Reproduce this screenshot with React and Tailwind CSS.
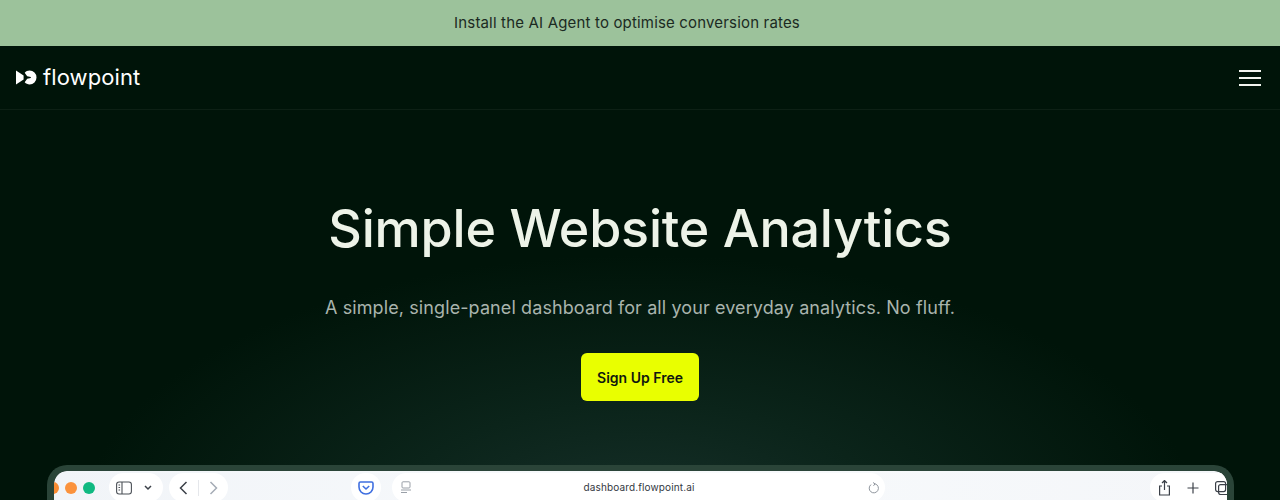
import React from "react";

const Logo = () => (
  <svg width="21" height="15" viewBox="0 0 21 15" fill="#fff">
    <path d="M0 .5 L7.6 5.4 L7.6 9.6 L0 14.5 Z" />
    <path d="M13.6 .6 A6.9 6.9 0 1 1 13.6 14.4 C11.6 14.4 10 13.6 8.7 12.2 L11.2 8.8 L14.8 8 L14.8 7 L11.2 6.2 L8.7 2.8 C10 1.4 11.6 .6 13.6 .6 Z" />
  </svg>
);

const Pill = ({ className = "", children }) => (
  <div className={`h-[29px] bg-white rounded-full flex items-center justify-center shrink-0 ${className}`}>{children}</div>
);

export default function App() {
  return (
    <div className="w-full h-[500px] overflow-hidden flex flex-col bg-[#001409] font-['Inter',sans-serif]">
      <div className="h-[46px] shrink-0 bg-[#9cc29b] flex items-center justify-center pr-[26px]">
        <span className="text-[15px] text-[#1b2a22] font-['Inter',sans-serif] tracking-[0.17px] font-normal">Install the AI Agent to optimise conversion rates</span>
      </div>
      <header className="h-[64px] shrink-0 border-b border-white/5 pl-4 pr-[19px] flex items-center justify-between">
        <div className="flex items-center gap-[6px]">
          <Logo />
          <span className="text-[22px] leading-none text-white font-['Inter',sans-serif] tracking-[0.1px] pb-[1px]">flowpoint</span>
        </div>
        <div className="w-[22px] flex flex-col gap-[5px]">
          <div className="h-[2px] bg-[#f2f5ef]" />
          <div className="h-[2px] bg-[#f2f5ef]" />
          <div className="h-[2px] bg-[#f2f5ef]" />
        </div>
      </header>
      <main className="flex-1 flex flex-col items-center pt-[88px] bg-[radial-gradient(ellipse_560px_270px_at_50%_100%,#17302a_0%,#0b241a_45%,#001409_100%)]">
        <h1 className="text-[52px] leading-[62px] font-medium text-[#edf3e8] font-['Inter',sans-serif] tracking-[-0.2px]">Simple Website Analytics</h1>
        <p className="mt-[34px] text-[18px] leading-[28px] text-[#a9b4ad] tracking-[0.1px]">A simple, single-panel dashboard for all your everyday analytics. No fluff.</p>
        <button className="mt-[31px] h-[48px] w-[118px] rounded-[6px] bg-[#e9ff00] text-[#10180f] text-[14px] font-semibold">Sign Up Free</button>
        <div className="mt-[64px] w-[1187px] h-[60px] shrink-0 rounded-t-[20px] border-x-[7px] border-t-[6px] border-[#2a4438] overflow-hidden">
          <div className="h-full rounded-t-[12px] overflow-hidden bg-gradient-to-r from-[#f1f4f8] via-[#f8fafc] to-[#f4f6f9]">
            <div className="pt-[2px] flex items-center text-[#3b4048] -ml-[7px]">
              <div className="flex items-center gap-[6px]">
                <span className="w-3 h-3 rounded-full bg-[#f98c33]" />
                <span className="w-3 h-3 rounded-full bg-[#fb923c]" />
                <span className="w-3 h-3 rounded-full bg-[#10b981]" />
              </div>
              <Pill className="w-[54px] ml-[14px] gap-[12px] justify-start pl-[7px]">
                <svg width="16" height="14" viewBox="0 0 16 14" fill="none" stroke="#4b5057" strokeWidth="1.1"><rect x=".6" y="1" width="14.8" height="12" rx="2.5" /><path d="M6 1v12M2.5 4h1.6M2.5 6.5h1.6M2.5 9h1.6" /></svg>
                <svg width="8" height="6" viewBox="0 0 8 6" fill="none" stroke="#3b4048" strokeWidth="1.5"><path d="M1 1l3 3 3-3" /></svg>
              </Pill>
              <Pill className="w-[59px] ml-[6px] gap-[10px]">
                <svg width="9" height="14" viewBox="0 0 9 14" fill="none" stroke="#3b4048" strokeWidth="1.5"><path d="M7.5 1L1.5 7l6 6" /></svg>
                <span className="w-px h-[16px] bg-[#e5e7eb]" />
                <svg width="9" height="14" viewBox="0 0 9 14" fill="none" stroke="#a5acb6" strokeWidth="1.5"><path d="M1.5 1l6 6-6 6" /></svg>
              </Pill>
              <Pill className="w-[30px] ml-[123px]">
                <svg width="16" height="14" viewBox="0 0 16 14" fill="none" stroke="#3f6fe0" strokeWidth="1.6"><path d="M1 2.5C1 1.7 1.6 1 2.4 1h11.2c.8 0 1.4.7 1.4 1.5V6c0 3.9-3.1 7-7 7s-7-3.1-7-7z" /><path d="M4.8 5l3.2 3 3.2-3" /></svg>
              </Pill>
              <Pill className="w-[493px] ml-[11px] relative">
                <svg className="absolute left-[8px]" width="12" height="13" viewBox="0 0 12 13" fill="none" stroke="#9aa0a8" strokeWidth="1"><rect x="2" y=".8" width="8" height="6.2" rx="1" /><path d="M1 9h10M1 11.5h6" /></svg>
                <span className="text-[10px] text-[#33383f] tracking-[0.13px] ml-[2px]">dashboard.flowpoint.ai</span>
                <svg className="absolute right-[5px]" width="12" height="12" viewBox="0 0 12 12" fill="none" stroke="#8f959d" strokeWidth="1"><path d="M7 1.8A4.6 4.6 0 1 1 3 2.6M7 1.8L5 .5M7 1.8L5.5 3.8" /></svg>
              </Pill>
              <Pill className="w-[90px] ml-[265px] gap-[16px] justify-start pl-[8px]">
                <svg width="13" height="16" viewBox="0 0 13 16" fill="none" stroke="#3b4048" strokeWidth="1.2"><path d="M4 6H1.6v9h9.8V6H9M6.5 10V1M4 3l2.5-2.5L9 3" /></svg>
                <svg width="12" height="12" viewBox="0 0 12 12" fill="none" stroke="#3b4048" strokeWidth="1.2"><path d="M6 .5v11M.5 6h11" /></svg>
                <svg width="14" height="14" viewBox="0 0 14 14" fill="none" stroke="#3b4048" strokeWidth="1.2"><rect x=".6" y=".6" width="10" height="10" rx="2" /><rect x="3.6" y="3.6" width="10" height="10" rx="2" /></svg>
              </Pill>
            </div>
          </div>
        </div>
      </main>
    </div>
  );
}
